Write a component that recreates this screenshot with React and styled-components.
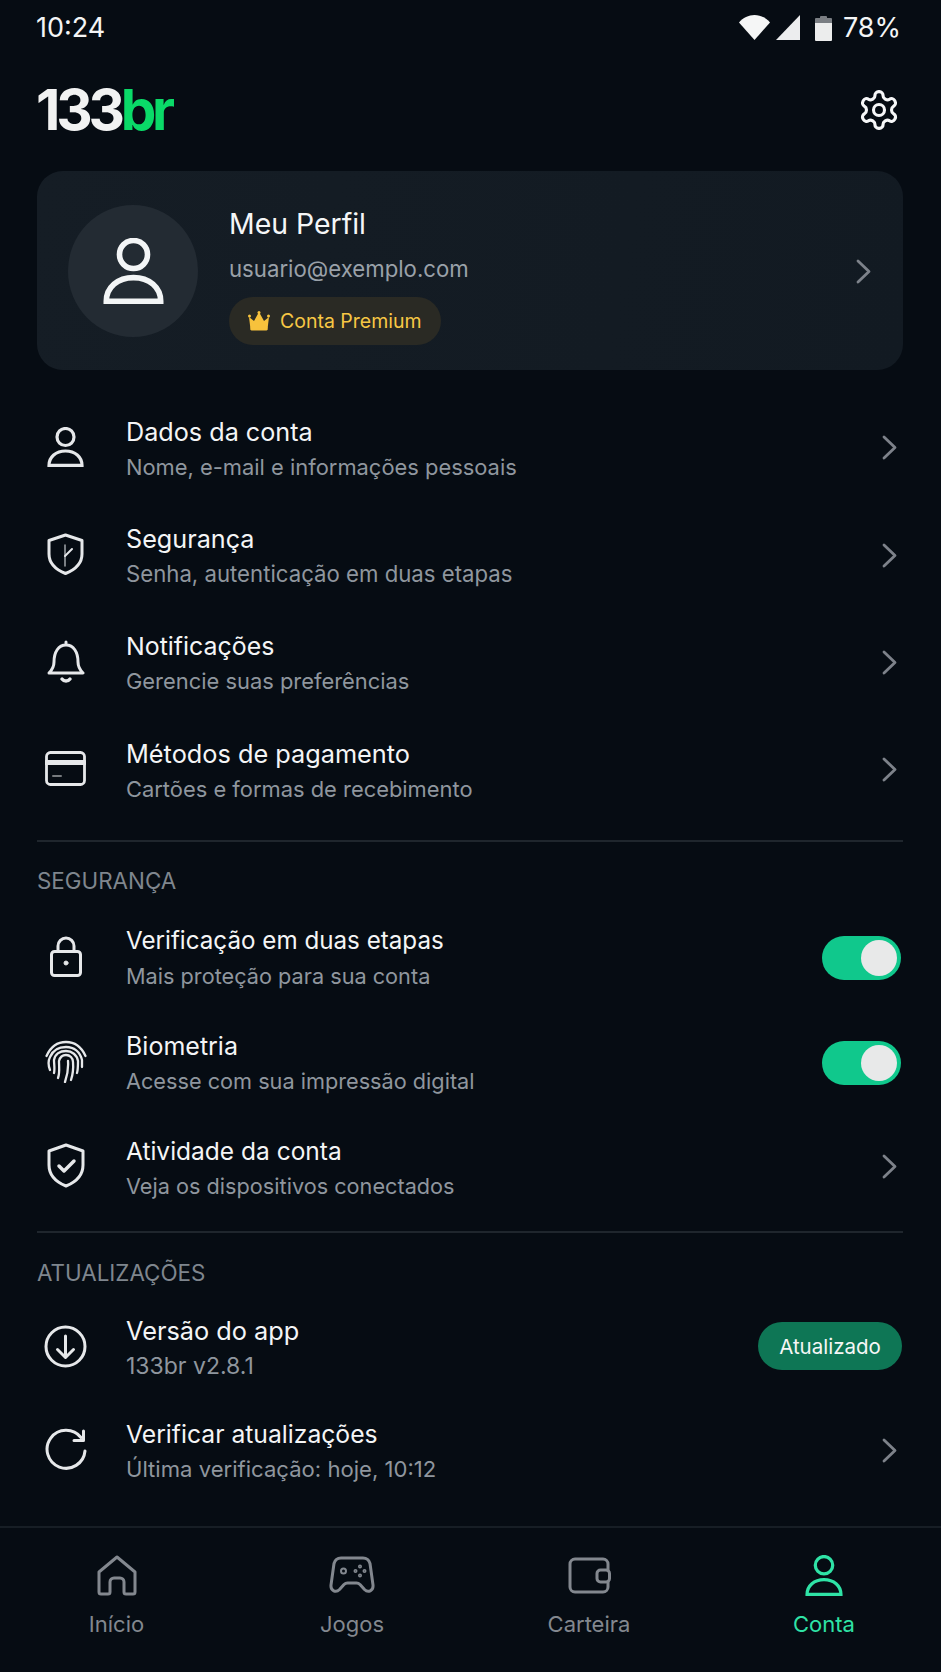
import React from "react";
import styled, { createGlobalStyle } from "styled-components";

const Global = createGlobalStyle`
  html, body { margin: 0; padding: 0; background: #060c13; }
  * { box-sizing: border-box; }
`;

const Page = styled.div`
  width: 941px; height: 1672px; overflow: hidden; display: flex; flex-direction: column;
  background: #060c13; color: #f3f5f6; font-family: Inter, "Liberation Sans", sans-serif;
`;
const StatusBar = styled.div`
  height: 55px; padding: 0 40px 0 36px; display: flex; align-items: center; justify-content: space-between;
  font-size: 27px; color: #f4f5f6;
`;
const StatusIcons = styled.div`display: flex; align-items: center; gap: 6px;`;
const BatterySlot = styled.span`display: flex; margin-left: 9px;`;
const BatteryText = styled.span`margin-left: 5px;`;
const Header = styled.div`
  height: 116px; padding: 0 40px 6px 36px; display: flex; align-items: center; justify-content: space-between;
`;
const Logo = styled.div`
  font-size: 56.5px; font-weight: 700; letter-spacing: -4.2px; line-height: 1; color: #f1f2f2; margin-top: 1px;
  span { color: #0ada68; }
`;
const ProfileCard = styled.div`
  margin: 0 38px 0 37px; height: 199px; border-radius: 26px; padding: 0 32px 0 31px;
  background: linear-gradient(100deg, #151d25, #121a22); display: flex; align-items: center;
`;
const Avatar = styled.div`
  width: 130px; height: 132px; border-radius: 50%; background: #232b33; flex: none;
  display: flex; align-items: center; justify-content: center;
`;
const ProfileText = styled.div`
  flex: 1; margin-left: 31px; padding-top: 10px; display: flex; flex-direction: column; align-items: flex-start;
`;
const ProfileName = styled.div`font-size: 28.4px; line-height: 36px; color: #f5f6f7;`;
const ProfileMail = styled.div`font-size: 22.2px; line-height: 30px; margin-top: 12px; color: #9aa1a9;`;
const Pill = styled.div`
  height: 48px; margin-top: 13px; padding: 0 19px; border-radius: 24px; background: #2a2a24;
  display: flex; align-items: center; gap: 10px; color: #f7c744; font-size: 19.5px;
`;
const List = styled.div`padding-top: ${p => p.$top}px;`;
const Row = styled.div`
  height: ${p => p.$h}px; padding: 0 39px 0 37px; display: flex; align-items: center;
`;
const IconSlot = styled.div`
  width: 57px; flex: none; display: flex; justify-content: center; color: #e6e8ea; margin-bottom: 6px;
`;
const RowText = styled.div`flex: 1; margin-left: 32px; margin-bottom: 2px;`;
const Title = styled.div`font-size: ${p => p.$fs || 25.2}px; line-height: 32px; color: #f4f5f6;`;
const Sub = styled.div`font-size: ${p => p.$fs || 21.9}px; line-height: 30px; margin-top: 4px; color: #8f969e;`;
const Chevron = styled.div`
  display: flex; color: #7d828a; margin-right: ${p => p.$mr ?? 5}px; margin-top: ${p => p.$mt ?? 0}px; margin-bottom: ${p => p.$mb ?? 4}px;
`;
const Divider = styled.div`height: 2px; margin: ${p => p.$m}; background: #1f262d;`;
const SectionLabel = styled.div`
  margin-left: 37px; height: ${p => p.$h}px; font-size: 22.4px; line-height: 30px; color: #7f868e; text-transform: uppercase;
`;
const Toggle = styled.div`
  width: 79px; height: 44px; border-radius: 22px; background: #10c88c; display: flex; align-items: center;
  justify-content: flex-end; padding-right: 4px; margin: 0 1px 2px 0;
`;
const Knob = styled.div`width: 36px; height: 36px; border-radius: 50%; background: #e8e9e9;`;
const Badge = styled.div`
  width: 144px; height: 48px; border-radius: 24px; background: #0e7655; color: #f5f7f6; font-size: 20.5px;
  display: flex; align-items: center; justify-content: center; margin-bottom: 6px;
`;
const Nav = styled.nav`
  margin-top: auto; height: 146px; border-top: 2px solid #171e25; display: grid; grid-template-columns: 233px 238px 236px 234px;
`;
const NavItem = styled.div`
  padding-top: 24px; display: flex; flex-direction: column; align-items: center; font-size: 22px;
  color: ${p => (p.$active ? "#2fe3a6" : "#83888f")};
`;
const NavIcon = styled.div`height: 46px; display: flex; align-items: center; justify-content: center;`;
const NavLabel = styled.div`margin-top: 11px; line-height: 30px;`;

const Svg = ({ w, h, vb, sw = 3, children }) => (
  <svg width={w} height={h} viewBox={vb || `0 0 ${w} ${h}`} fill="none" stroke="currentColor" strokeWidth={sw} strokeLinecap="round" strokeLinejoin="round">{children}</svg>
);

const Person = ({ w = 37, h = 40, sw = 3.2 }) => (
  <Svg w={w} h={h} vb="0 0 37 40" sw={sw}>
    <circle cx="18.5" cy="10" r="8.5" />
    <path d="M2 38.4h33c0-8.5-7-14.4-16.5-14.4S2 29.9 2 38.4Z" strokeLinejoin="miter" />
  </Svg>
);
const ChevronIcon = ({ w = 15, h = 25 }) => (
  <Svg w={w} h={h} vb="0 0 15 25" sw={2.8}><path d="M2 2l11 10.5L2 23" /></Svg>
);
const Gear = () => (
  <svg width="44" height="46" viewBox="0 0 24 24" fill="none" stroke="#f6f7f8" strokeWidth="1.7" strokeLinecap="round" strokeLinejoin="round">
    <path d="M12.22 2h-.44a2 2 0 0 0-2 2v.18a2 2 0 0 1-1 1.73l-.43.25a2 2 0 0 1-2 0l-.15-.08a2 2 0 0 0-2.73.73l-.22.38a2 2 0 0 0 .73 2.73l.15.1a2 2 0 0 1 1 1.72v.51a2 2 0 0 1-1 1.74l-.15.09a2 2 0 0 0-.73 2.73l.22.38a2 2 0 0 0 2.73.73l.15-.08a2 2 0 0 1 2 0l.43.25a2 2 0 0 1 1 1.73V20a2 2 0 0 0 2 2h.44a2 2 0 0 0 2-2v-.18a2 2 0 0 1 1-1.73l.43-.25a2 2 0 0 1 2 0l.15.08a2 2 0 0 0 2.73-.73l.22-.39a2 2 0 0 0-.73-2.73l-.15-.08a2 2 0 0 1-1-1.74v-.5a2 2 0 0 1 1-1.74l.15-.09a2 2 0 0 0 .73-2.73l-.22-.38a2 2 0 0 0-2.73-.73l-.15.08a2 2 0 0 1-2 0l-.43-.25a2 2 0 0 1-1-1.73V4a2 2 0 0 0-2-2z" />
    <circle cx="12" cy="12" r="3" />
  </svg>
);
const Wifi = () => (
  <svg width="31" height="25" viewBox="0 0 31 25"><path d="M0 7.5C4 2.8 9.5 0 15.5 0S27 2.8 31 7.5L15.5 25Z" fill="#f5f6f6" /></svg>
);
const Signal = () => (
  <svg width="24" height="25" viewBox="0 0 24 25"><path d="M24 0v25H0Z" fill="#ecedee" /></svg>
);
const BatteryIcon = () => (
  <svg width="17" height="26" viewBox="0 0 17 26">
    <path d="M5 2a1 1 0 0 1 1-1h5a1 1 0 0 1 1 1v1h4a1 1 0 0 1 1 1v4H0V4a1 1 0 0 1 1-1h4Z" fill="#7a7e83" />
    <path d="M0 8h17v17a1 1 0 0 1-1 1H1a1 1 0 0 1-1-1Z" fill="#eceded" />
  </svg>
);
const Crown = () => (
  <svg width="22" height="20" viewBox="0 0 22 20" fill="#f7c23c">
    <path d="M1 6l5 4 5-9 5 9 5-4-1.600 13H2.600Z" />
    <rect x="2.600" y="15" width="16.800" height="4.500" rx="1" />
    <circle cx="1.500" cy="5" r="1.500" /><circle cx="11" cy="1.500" r="1.500" /><circle cx="20.500" cy="5" r="1.500" />
  </svg>
);
const ShieldClock = () => (
  <Svg w={37} h={42} sw={3}>
    <path d="M18.5 2 35 7.5V21c0 9-6.5 15.5-16.5 19.5C8.500 36.500 2 30 2 21V7.500Z" />
    <path d="M18 33V12" strokeWidth="1.5" opacity=".7" /><path d="M18 23l7-7" strokeWidth="2" />
  </Svg>
);
const Bell = () => (
  <Svg w={38} h={43} sw={3}>
    <path d="M19 2v3M7 22c0-10 4.500-17 12-17s12 7 12 17c0 5 2 8 5 11H2c3-3 5-6 5-11Z" />
    <path d="M15 39c2 2.500 6 2.500 8 0" strokeWidth="3.5" />
  </Svg>
);
const Card = () => (
  <Svg w={41} h={35} sw={2.8}>
    <rect x="1.5" y="1.5" width="38" height="32" rx="4" />
    <path d="M1.5 11.5h38" strokeWidth="5" /><path d="M8 25h8" strokeWidth="2" opacity=".5" />
  </Svg>
);
const Lock = () => (
  <Svg w={32} h={41} sw={3}>
    <rect x="1.5" y="15.5" width="29" height="24" rx="3" />
    <path d="M8 15.5V10a8 8 0 0 1 16 0v5.5" />
    <circle cx="16" cy="27" r="2" fill="currentColor" strokeWidth="1" />
  </Svg>
);
const Finger = () => (
  <Svg w={42} h={43} vb="0 0 42 43" sw={2.3}>
    <path d="M1.5 16C6 6 13 2 21 2s15 4 19.500 14" />
    <path d="M5 30C3 25 3 21 5 17 8 10 14 7 21 7c8 0 14 5 16 13v7" />
    <path d="M9 33c1-4 0-9 0-13 1-6 6-9 12-9s11 4 12 10c0 4 0 9-1 12" />
    <path d="M13 38c2-5 1-11 1-17 1-4 4-6 7-6 4 0 7 3 7 7 .500 6 0 12-2 18" />
    <path d="M20 42c2.500-7 3.500-14 3-21" />
  </Svg>
);
const ShieldCheck = () => (
  <Svg w={38} h={45} sw={3}>
    <path d="M19 2 36 8v14c0 10-7 17-17 21C9 39 2 32 2 22V8Z" />
    <path d="M12 23l5 5 10-10" strokeWidth="3.5" />
  </Svg>
);
const Download = () => (
  <Svg w={43} h={43} sw={3}>
    <circle cx="21.5" cy="21.5" r="19.5" />
    <path d="M21.5 11v21M13.500 24.500l8 8 8-8" />
  </Svg>
);
const Refresh = () => (
  <Svg w={42} h={42} sw={3}>
    <path d="M36 9.500A19 19 0 1 0 40 23" />
    <path d="M38.500 3v9.500H29" />
  </Svg>
);
const Home = () => (
  <Svg w={40} h={41} sw={3}>
    <path d="M2 17 20 2l18 15v20a2 2 0 0 1-2 2h-7a2 2 0 0 1-2-2V27a4 4 0 0 0-4-4h-6a4 4 0 0 0-4 4v10a2 2 0 0 1-2 2H4a2 2 0 0 1-2-2Z" />
  </Svg>
);
const Pad = () => (
  <Svg w={46} h={38} sw={3}>
    <path d="M12 2h22c3.500 0 6 2 7 5.500L44 29c.600 6-5 8-8.500 4.500L31 28.500c-1-1-2-1.500-3.500-1.500h-9c-1.500 0-2.500.500-3.500 1.500l-4.500 5C7 37 1.400 35 2 29L5 7.500C6 4 8.500 2 12 2Z" />
    <circle cx="14.500" cy="15" r="2.500" strokeWidth="2" />
    <circle cx="31" cy="10.500" r="1.200" strokeWidth="1.600" />
    <circle cx="31" cy="19.500" r="1.200" strokeWidth="1.600" />
    <circle cx="26.500" cy="15" r="1.200" strokeWidth="1.600" />
    <circle cx="35.500" cy="15" r="1.200" strokeWidth="1.600" />
  </Svg>
);
const Wallet = () => (
  <Svg w={43} h={37} sw={3}>
    <path d="M40 13V7a5 5 0 0 0-5-5H7a5 5 0 0 0-5 5v23a5 5 0 0 0 5 5h28a5 5 0 0 0 5-5v-5" />
    <rect x="29" y="13" width="12.500" height="12" rx="3.500" />
  </Svg>
);

const Item = ({ h, icon, title, sub, titleSize, subSize, right }) => (
  <Row $h={h}>
    <IconSlot>{icon}</IconSlot>
    <RowText><Title $fs={titleSize}>{title}</Title><Sub $fs={subSize}>{sub}</Sub></RowText>
    {right || <Chevron><ChevronIcon /></Chevron>}
  </Row>
);
const Switch = () => <Toggle><Knob /></Toggle>;

export default function App() {
  return (
    <Page>
      <Global />
      <StatusBar>
        <span>10:24</span>
        <StatusIcons><Wifi /><Signal /><BatterySlot><BatteryIcon /></BatterySlot><BatteryText>78%</BatteryText></StatusIcons>
      </StatusBar>
      <Header>
        <Logo>133<span>br</span></Logo>
        <Gear />
      </Header>
      <ProfileCard>
        <Avatar><Person w={61} h={66} sw={3.4} /></Avatar>
        <ProfileText>
          <ProfileName>Meu Perfil</ProfileName>
          <ProfileMail>usuario@exemplo.com</ProfileMail>
          <Pill><Crown />Conta Premium</Pill>
        </ProfileText>
        <Chevron $mr={0} $mb={0} $mt={2}><ChevronIcon /></Chevron>
      </ProfileCard>
      <List $top={26}>
        <Item h={107.4} icon={<Person />} title="Dados da conta" sub="Nome, e-mail e informações pessoais" />
        <Item h={107.4} icon={<ShieldClock />} title="Segurança" subSize={22.2} sub="Senha, autenticação em duas etapas" />
        <Item h={107.4} icon={<Bell />} title="Notificações" titleSize={24.9} sub="Gerencie suas preferências" />
        <Item h={107.4} icon={<Card />} title="Métodos de pagamento" titleSize={25.3} sub="Cartões e formas de recebimento" />
      </List>
      <Divider $m="14px 38px 0 37px" />
      <List $top={24}>
        <SectionLabel $h={41}>Segurança</SectionLabel>
        <Item h={105} icon={<Lock />} title="Verificação em duas etapas" titleSize={24.2} subSize={21.7} sub="Mais proteção para sua conta" right={<Switch />} />
        <Item h={105} icon={<Finger />} title="Biometria" titleSize={25} subSize={21.7} sub="Acesse com sua impressão digital" right={<Switch />} />
        <Item h={104} icon={<ShieldCheck />} title="Atividade da conta" titleSize={24.5} subSize={21.7} sub="Veja os dispositivos conectados" />
      </List>
      <Divider $m="10px 38px 0 37px" />
      <List $top={25}>
        <SectionLabel $h={40}>Atualizações</SectionLabel>
        <Item h={103} icon={<Download />} title="Versão do app" titleSize={25.3} subSize={23} sub="133br v2.8.1" right={<Badge>Atualizado</Badge>} />
        <Item h={103} icon={<Refresh />} title="Verificar atualizações" titleSize={24.7} subSize={22.1} sub="Última verificação: hoje, 10:12" />
      </List>
      <Nav>
        <NavItem><NavIcon><Home /></NavIcon><NavLabel>Início</NavLabel></NavItem>
        <NavItem><NavIcon><Pad /></NavIcon><NavLabel>Jogos</NavLabel></NavItem>
        <NavItem><NavIcon><Wallet /></NavIcon><NavLabel>Carteira</NavLabel></NavItem>
        <NavItem $active><NavIcon><Person w={40} h={41} /></NavIcon><NavLabel>Conta</NavLabel></NavItem>
      </Nav>
    </Page>
  );
}
